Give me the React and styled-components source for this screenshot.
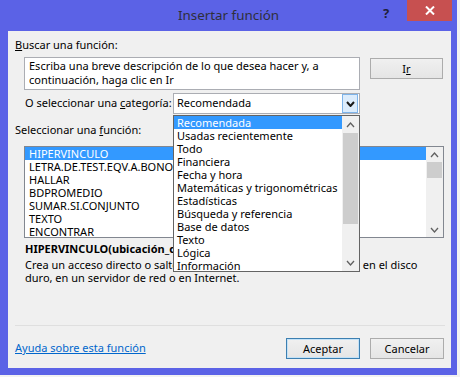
import React from "react";
import styled, { createGlobalStyle } from "styled-components";

const FONT = `"Segoe UI", "Noto Sans", "Open Sans", sans-serif`;

const GlobalStyle = createGlobalStyle`
  html, body { margin: 0; padding: 0; }
  body {
    width: 460px;
    height: 377px;
    overflow: hidden;
    background: #f2f2f2;
    font-family: ${FONT};
    font-size: 11px;
    color: #000;
  }
`;

const Window = styled.div`
  width: 457px;
  height: 375px;
  background: #5b62e6;
  display: flex;
  flex-direction: column;
  box-sizing: border-box;
`;

const TitleBar = styled.div`
  height: 31px;
  flex: none;
  display: grid;
  grid-template-columns: 1fr auto 1fr;
  align-items: start;
`;

const Title = styled.div`
  grid-column: 2;
  padding-top: 6px;
  font-size: 13.4px;
  line-height: 19px;
  color: #2f2f3a;
`;

const Controls = styled.div`
  grid-column: 3;
  justify-self: end;
  display: flex;
  align-items: flex-start;
  padding-right: 5px;
`;

const HelpGlyph = styled.div`
  width: 24px;
  padding-top: 5px;
  font-size: 13px;
  font-weight: bold;
  line-height: 16px;
  color: #1f1f3a;
  text-align: left;
`;

const CloseButton = styled.div`
  width: 45px;
  height: 21px;
  background: #c75050;
  display: flex;
  align-items: center;
  justify-content: center;
`;

const Client = styled.div`
  flex: 1;
  margin: 0 6px 7px 8px;
  background: #f0f0f0;
  position: relative;
  display: flex;
  flex-direction: column;
`;

const Label = styled.div`
  margin: ${(p) => p.$top || 0}px 0 0 ${(p) => p.$indent || 7}px;
  line-height: 16px;
  white-space: nowrap;
`;

const Row = styled.div`
  display: flex;
  align-items: flex-start;
  margin: ${(p) => p.$top || 0}px 0 0 ${(p) => p.$indent || 16}px;
`;

const SearchBox = styled.div`
  width: 336px;
  height: 33px;
  box-sizing: border-box;
  border: 1px solid #abadb3;
  background: #fff;
  padding: 1px 0 0 4px;
  line-height: 14px;
  white-space: nowrap;
  overflow: hidden;
`;

const PushButton = styled.div`
  width: ${(p) => p.$w || 73}px;
  height: 21px;
  box-sizing: border-box;
  margin-top: ${(p) => p.$top || 0}px;
  margin-left: ${(p) => p.$gap || 0}px;
  border: 1px solid ${(p) => (p.$default ? "#3c7fb1" : "#acacac")};
  box-shadow: ${(p) => (p.$default ? "inset 0 0 0 1px #c4e2f7" : "none")};
  background: linear-gradient(#f0f0f0, #e5e5e5);
  display: flex;
  align-items: center;
  justify-content: center;
  line-height: 16px;
`;

const CategoryLabel = styled.div`
  width: 148px;
  line-height: 16px;
  padding-top: 2px;
  white-space: nowrap;
`;

const Select = styled.div`
  width: 187px;
  height: 21px;
  box-sizing: border-box;
  border: 1px solid #abadb3;
  background: #fff;
  display: flex;
  align-items: stretch;
`;

const SelectValue = styled.div`
  flex: 1;
  padding-left: 3px;
  line-height: 18px;
`;

const SelectArrow = styled.div`
  width: 16px;
  margin: 0 1px 0 0;
  box-sizing: border-box;
  border: 1px solid #7eb4ea;
  background: #dcecfc;
  display: flex;
  align-items: center;
  justify-content: center;
`;

const ListBox = styled.div`
  width: ${(p) => p.$w}px;
  height: ${(p) => p.$h}px;
  box-sizing: border-box;
  border: 1px solid ${(p) => p.$border || "#828790"};
  background: #fff;
  display: flex;
  margin: ${(p) => p.$top || 0}px 0 0 ${(p) => p.$indent || 0}px;
`;

const Items = styled.div`
  flex: 1;
  overflow: hidden;
`;

const Item = styled.div`
  height: 13px;
  line-height: 13px;
  padding-left: ${(p) => p.$indent || 3}px;
  white-space: nowrap;
  background: ${(p) => (p.$selected ? "#3399ff" : "transparent")};
  color: ${(p) => (p.$selected ? "#fff" : "#000")};
`;

const ScrollBar = styled.div`
  width: 17px;
  flex: none;
  background: #f0f0f0;
  display: flex;
  flex-direction: column;
`;

const ScrollArrow = styled.div`
  height: ${(p) => p.$h || 17}px;
  flex: none;
  display: flex;
  align-items: center;
  justify-content: center;
`;

const Track = styled.div`
  flex: 1;
  display: flex;
  flex-direction: column;
  align-items: center;
`;

const Thumb = styled.div`
  width: 15px;
  height: ${(p) => p.$h}px;
  background: #cdcdcd;
`;

const Signature = styled.div`
  margin: 3px 0 0 17px;
  font-weight: bold;
  line-height: 16px;
  white-space: nowrap;
`;

const Description = styled.div`
  margin: 1px 0 0 17px;
  line-height: 13px;
  white-space: nowrap;
`;

const Separator = styled.div`
  margin: auto 0 0 7px;
  width: 430px;
  height: 1px;
  background: #dfdfdf;
`;

const Footer = styled.div`
  display: flex;
  align-items: center;
  margin: 12px 7px 9px 7px;
`;

const HelpLink = styled.a`
  flex: 1;
  color: #0066cc;
  text-decoration: underline;
  line-height: 16px;
  margin-top: -1px;
`;

const Popup = styled.div`
  position: absolute;
  left: 165px;
  top: 84px;
  width: 187px;
  height: 157px;
  box-sizing: border-box;
  border: 1px solid #646464;
  background: #fff;
  display: flex;
`;

const Chevron = ({ up, color = "#606060", w = 7, h = 4, sw = 1.3 }) => (
  <svg width={w + 2} height={h + 2} viewBox={`0 0 ${w + 2} ${h + 2}`}>
    <polyline
      points={
        up
          ? `1,${h + 1} ${(w + 2) / 2},1 ${w + 1},${h + 1}`
          : `1,1 ${(w + 2) / 2},${h + 1} ${w + 1},1`
      }
      fill="none"
      stroke={color}
      strokeWidth={sw}
    />
  </svg>
);

const CloseX = () => (
  <svg width="10" height="9" viewBox="0 0 10 9">
    <path d="M1 0.5 L9 8.5 M9 0.5 L1 8.5" stroke="#fff" strokeWidth="2" />
  </svg>
);

const functions = [
  "HIPERVINCULO",
  "LETRA.DE.TEST.EQV.A.BONO",
  "HALLAR",
  "BDPROMEDIO",
  "SUMAR.SI.CONJUNTO",
  "TEXTO",
  "ENCONTRAR",
];

const categories = [
  "Recomendada",
  "Usadas recientemente",
  "Todo",
  "Financiera",
  "Fecha y hora",
  "Matemáticas y trigonométricas",
  "Estadísticas",
  "Búsqueda y referencia",
  "Base de datos",
  "Texto",
  "Lógica",
  "Información",
];

export default function App() {
  return (
    <>
      <GlobalStyle />
      <Window>
        <TitleBar>
          <Title>Insertar función</Title>
          <Controls>
            <HelpGlyph>?</HelpGlyph>
            <CloseButton>
              <CloseX />
            </CloseButton>
          </Controls>
        </TitleBar>
        <Client>
          <Label $top={6}>
            <u>B</u>uscar una función:
          </Label>
          <Row $top={4}>
            <SearchBox>
              Escriba una breve descripción de lo que desea hacer y, a
              <br />
              continuación, haga clic en Ir
            </SearchBox>
            <PushButton $top={1} $gap={10}>
              I<u>r</u>
            </PushButton>
          </Row>
          <Row $top={3} $indent={17}>
            <CategoryLabel>
              O seleccionar una <u>c</u>ategoría:
            </CategoryLabel>
            <Select>
              <SelectValue>Recomendada</SelectValue>
              <SelectArrow>
                <Chevron color="#1a1a1a" w={7} h={4} sw={2} />
              </SelectArrow>
            </Select>
          </Row>
          <Label $top={8}>
            Seleccionar una <u>f</u>unción:
          </Label>
          <ListBox $w={420} $h={92} $top={8} $indent={16}>
            <Items>
              {functions.map((f, i) => (
                <Item key={f} $selected={i === 0} $indent={4}>
                  {f}
                </Item>
              ))}
            </Items>
            <ScrollBar>
              <ScrollArrow $h={15}>
                <Chevron up />
              </ScrollArrow>
              <Track>
                <Thumb $h={16} />
              </Track>
              <ScrollArrow $h={15}>
                <Chevron />
              </ScrollArrow>
            </ScrollBar>
          </ListBox>
          <Signature>HIPERVINCULO(ubicación_del_vínculo;nombre_descriptivo)</Signature>
          <Description>
            Crea un acceso directo o salto que abre un documento guardado en el disco
            <br />
            duro, en un servidor de red o en Internet.
          </Description>
          <Separator />
          <Footer>
            <HelpLink>Ayuda sobre esta función</HelpLink>
            <PushButton $w={74} $default>
              Aceptar
            </PushButton>
            <PushButton $w={74} $gap={10}>
              Cancelar
            </PushButton>
          </Footer>
          <Popup>
            <Items>
              {categories.map((c, i) => (
                <Item key={c} $selected={i === 0}>
                  {c}
                </Item>
              ))}
            </Items>
            <ScrollBar>
              <ScrollArrow $h={17}>
                <Chevron up />
              </ScrollArrow>
              <Track>
                <Thumb $h={91} />
              </Track>
              <ScrollArrow $h={17}>
                <Chevron />
              </ScrollArrow>
            </ScrollBar>
          </Popup>
        </Client>
      </Window>
    </>
  );
}
